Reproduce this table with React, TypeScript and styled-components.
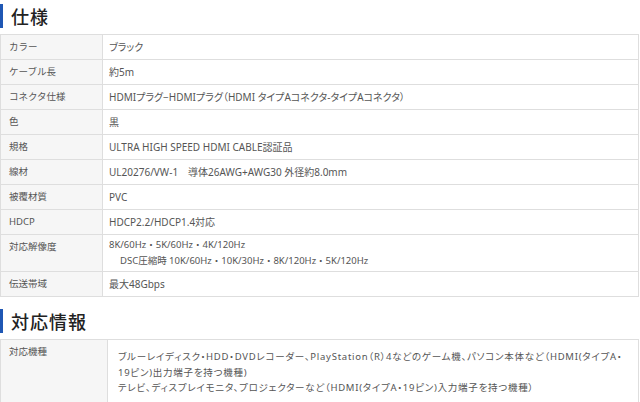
import styled, { createGlobalStyle } from 'styled-components';

const GlobalStyle = createGlobalStyle`
body {
  margin: 0;
  background: #ffffff;
  font-family: "Noto Sans", "Noto Sans CJK JP", sans-serif;
}
`;

const Page = styled.div`
display: flex;
flex-direction: column;
width: 640px;
padding-top: 4px;
`;

const Heading = styled.h2`
display: flex;
align-items: center;
height: 24px;
margin: 0 0 6px 0;
padding-left: 8px;
border-left: 3px solid #1f57b4;
font-family: "Noto Sans CJK JP", sans-serif;
font-size: 18px;
font-weight: 500;
letter-spacing: 1px;
color: #222222;
`;

const Table = styled.table<{ $gap?: number }>`
width: 639px;
border-collapse: collapse;
margin-bottom: ${p => p.$gap ?? 0}px;
`;

const Label = styled.th<{ $w: number }>`
width: ${p => p.$w}px;
padding: 0 8px;
background: #f6f6f6;
border: 1px solid #dedede;
text-align: left;
vertical-align: top;
font-size: 9.5px;
font-weight: 400;
color: #555555;
line-height: 24px;
`;

const Value = styled.td<{ $pad: number }>`
padding: 0 8px 0 ${p => p.$pad}px;
border: 1px solid #dedede;
font-size: 10px;
font-feature-settings: "palt";
color: #555555;
line-height: 24px;
`;

const MultiValue = styled(Value)`
padding-top: 2px;
padding-bottom: 2px;
font-size: 9.5px;
font-feature-settings: normal;
line-height: 16px;
`;

const Indent = styled.div`
padding-left: 11px;
`;

const SpacedValue = styled(Value)`
padding-top: 9px;
padding-bottom: 6px;
font-size: 9.5px;
line-height: 15.5px;
white-space: nowrap;
letter-spacing: 0.75px;
`;

const specs: [string, string][] = [
    ['カラー', 'ブラック'],
    ['ケーブル長', '約5m'],
    ['コネクタ仕様', 'HDMIプラグ−HDMIプラグ（HDMI タイプAコネクタ-タイプAコネクタ）'],
    ['色', '黒'],
    ['規格', 'ULTRA HIGH SPEED HDMI CABLE認証品'],
    ['線材', 'UL20276/VW-1　導体26AWG+AWG30 外径約8.0mm'],
    ['被覆材質', 'PVC'],
    ['HDCP', 'HDCP2.2/HDCP1.4対応'],
];

const App = () => {
    return (
        <Page>
            <GlobalStyle />
            <Heading>仕様</Heading>
            <Table $gap={12}>
                <tbody>
                    {specs.map(([k, v]) => (
                        <tr key={k}>
                            <Label $w={85}>{k}</Label>
                            <Value $pad={6}>{v}</Value>
                        </tr>
                    ))}
                    <tr>
                        <Label $w={85}>対応解像度</Label>
                        <MultiValue $pad={6}>
                            8K/60Hz・5K/60Hz・4K/120Hz
                            <Indent>DSC圧縮時 10K/60Hz・10K/30Hz・8K/120Hz・5K/120Hz</Indent>
                        </MultiValue>
                    </tr>
                    <tr>
                        <Label $w={85}>伝送帯域</Label>
                        <Value $pad={6}>最大48Gbps</Value>
                    </tr>
                </tbody>
            </Table>
            <Heading>対応情報</Heading>
            <Table>
                <tbody>
                    <tr>
                        <Label $w={90}>対応機種</Label>
                        <SpacedValue $pad={10}>
                            ブルーレイディスク・HDD・DVDレコーダー、PlayStation（R）4などのゲーム機、パソコン本体など（HDMI(タイプA・<br />
                            19ピン)出力端子を持つ機種)<br />
                            テレビ、ディスプレイモニタ、プロジェクターなど（HDMI(タイプA・19ピン)入力端子を持つ機種）
                        </SpacedValue>
                    </tr>
                </tbody>
            </Table>
        </Page>
    )
}

export default App
